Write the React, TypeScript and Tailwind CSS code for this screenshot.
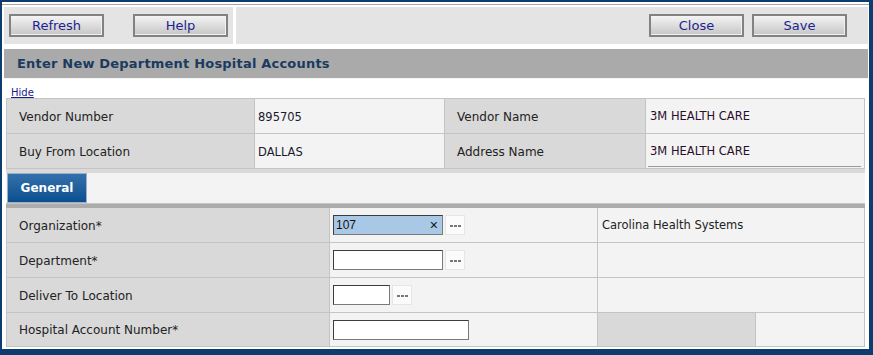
import React from 'react';

const font = "font-['DejaVu_Sans',sans-serif]";

function ToolButton({ label }: { label: string }) {
  return (
    <button className="w-[95px] h-[23px] border-2 border-[#828282] bg-linear-to-b from-[#f4f4f4] to-[#c6c6c6] text-[13px] leading-none text-[#1f1f8f] shadow-[inset_-1px_-1px_0_#f0f0f0]">
      {label}
    </button>
  );
}

function LookupButton() {
  return (
    <span className="ml-[2px] w-[20px] h-[20px] flex items-center justify-center gap-px bg-[#fbfbfb] border border-[#e6e6e6] pt-px">
      <span className="w-[3px] h-[2px] bg-[#777]" />
      <span className="w-[3px] h-[2px] bg-[#777]" />
      <span className="w-[3px] h-[2px] bg-[#777]" />
    </span>
  );
}

function TextBox({ width, value, selected }: { width: string; value?: string; selected?: boolean }) {
  return (
    <div
      className={`${width} h-[20px] flex items-center justify-between px-[2px] border border-[#7a7a7a] border-t-[#3c3c3c] border-l-[#3c3c3c] font-['Liberation_Sans',sans-serif] text-[12px] text-[#111] ${
        selected ? 'bg-[#a9c8e6]' : 'bg-white'
      }`}
    >
      <span>{value}</span>
      {selected && <span className="text-[14px] leading-none mr-[2px]">×</span>}
    </div>
  );
}

const vendorRows = [
  { l1: 'Vendor Number', v1: '895705', l2: 'Vendor Name', v2: '3M HEALTH CARE' },
  { l1: 'Buy From Location', v1: 'DALLAS', l2: 'Address Name', v2: '3M HEALTH CARE' },
];

export default function App() {
  return (
    <div className={`w-[873px] h-[355px] bg-[#0d3c71] pt-[2px] pl-[2px] pr-[4px] pb-[6px] ${font}`}>
      <div className="h-full bg-white flex flex-col">
        {/* top rule */}
        <div className="pt-[2px]">
          <div className="h-px bg-[#a6a6a6]" />
          <div className="h-[2px]" />
        </div>

        {/* toolbar */}
        <div className="flex h-[37px] pl-[2px] pr-px gap-[3px]">
          <div className="w-[229px] bg-[#e4e4e4] flex items-center pl-[5px] gap-[29px]">
            <ToolButton label="Refresh" />
            <ToolButton label="Help" />
          </div>
          <div className="flex-1 bg-[#e4e4e4] flex items-center justify-end gap-[8px] pr-[21px]">
            <ToolButton label="Close" />
            <ToolButton label="Save" />
          </div>
        </div>

        <div className="h-[5px]" />

        {/* title */}
        <div className="ml-[2px] mr-px h-[30px] bg-[#a9aaa9] flex items-center pl-[13px] pt-px border-b border-[#f4f4f4]">
          <h1 className="text-[13px] font-bold tracking-[0.2px] text-[#1b3a5f]">Enter New Department Hospital Accounts</h1>
        </div>

        <div className="h-[19px] pl-[9px] pt-[8px]">
          <a className="block text-[10px] leading-[12px] text-[#1a1a8c] underline">Hide</a>
        </div>

        {/* vendor info */}
        <div className="ml-[4px] mr-[4px] border-t border-l border-[#c4c4c4]">
          {vendorRows.map((r, i) => (
            <div key={i} className="grid grid-cols-[248px_190px_201px_219px] h-[35px] text-[#222]">
              <div className="bg-[#d9d9d9] border-r border-b border-[#c4c4c4] flex items-center pl-[12px] pt-px text-[12px]">
                {r.l1}
              </div>
              <div className="bg-[#f3f3f3] border-r border-b border-[#c4c4c4] flex items-center pl-[3px] pt-[3px] text-[11.5px] text-[#1a1a2e]">
                {r.v1}
              </div>
              <div className="bg-[#d9d9d9] border-r border-b border-[#c4c4c4] flex items-center pl-[12px] pt-px text-[12px]">
                {r.l2}
              </div>
              <div className="bg-[#f3f3f3] border-r border-b border-[#c4c4c4] flex flex-col justify-center pl-[3px] pt-[2px] text-[11.5px] text-[#2a0d2a] relative">
                <span className="pl-px">{r.v2}</span>
                {i === 1 && <span className="absolute left-[2px] right-[3px] bottom-[1px] h-px bg-[#9a9a9a]" />}
              </div>
            </div>
          ))}
        </div>

        <div className="ml-[4px] mr-[4px] h-[4px] bg-[#dadada]" />

        {/* tabs */}
        <div className="ml-[4px] mr-[4px] h-[30px] bg-[#f3f3f3] flex">
          <div className="ml-px w-[80px] h-full border border-[#9ab0c6] bg-linear-to-b from-[#3271ab] to-[#0b4e8f] flex items-center justify-center text-[12px] font-bold text-white">
            General
          </div>
        </div>
        <div className="ml-[4px] mr-[4px] h-[5px] bg-[#acacac] border-t border-[#c4c4c4]" />

        {/* form */}
        <div className="ml-[4px] mr-[4px] border-l border-[#c4c4c4] text-[12px] text-[#222]">
          <div className="grid grid-cols-[323px_268px_267px] h-[35px]">
            <div className="bg-[#d9d9d9] border-r border-b border-[#c4c4c4] flex items-center pl-[12px] pt-px">Organization*</div>
            <div className="bg-[#f3f3f3] border-r border-b border-[#c4c4c4] flex items-center pl-[3px]">
              <TextBox width="w-[110px]" value="107" selected />
              <LookupButton />
            </div>
            <div className="bg-[#f3f3f3] border-r border-b border-[#c4c4c4] flex items-center pl-[4px] pt-px text-[11.5px]">
              Carolina Health Systems
            </div>
          </div>
          <div className="grid grid-cols-[323px_268px_267px] h-[35px]">
            <div className="bg-[#d9d9d9] border-r border-b border-[#c4c4c4] flex items-center pl-[12px] pt-px">Department*</div>
            <div className="bg-[#f3f3f3] border-r border-b border-[#c4c4c4] flex items-center pl-[3px]">
              <TextBox width="w-[110px]" />
              <LookupButton />
            </div>
            <div className="bg-[#f3f3f3] border-r border-b border-[#c4c4c4]" />
          </div>
          <div className="grid grid-cols-[323px_268px_267px] h-[35px]">
            <div className="bg-[#d9d9d9] border-r border-b border-[#c4c4c4] flex items-center pl-[12px] pt-px">Deliver To Location</div>
            <div className="bg-[#f3f3f3] border-r border-b border-[#c4c4c4] flex items-center pl-[3px]">
              <TextBox width="w-[57px]" />
              <LookupButton />
            </div>
            <div className="bg-[#f3f3f3] border-r border-b border-[#c4c4c4]" />
          </div>
          <div className="grid grid-cols-[323px_268px_158px_109px] h-[34px]">
            <div className="bg-[#d9d9d9] border-r border-b border-[#c4c4c4] flex items-center pl-[12px] pt-px">Hospital Account Number*</div>
            <div className="bg-[#f3f3f3] border-r border-b border-[#c4c4c4] flex items-center pl-[3px]">
              <TextBox width="w-[136px]" />
            </div>
            <div className="bg-[#d9d9d9] border-r border-b border-[#c4c4c4]" />
            <div className="bg-[#f3f3f3] border-r border-b border-[#c4c4c4]" />
          </div>
        </div>
      </div>
    </div>
  );
}
